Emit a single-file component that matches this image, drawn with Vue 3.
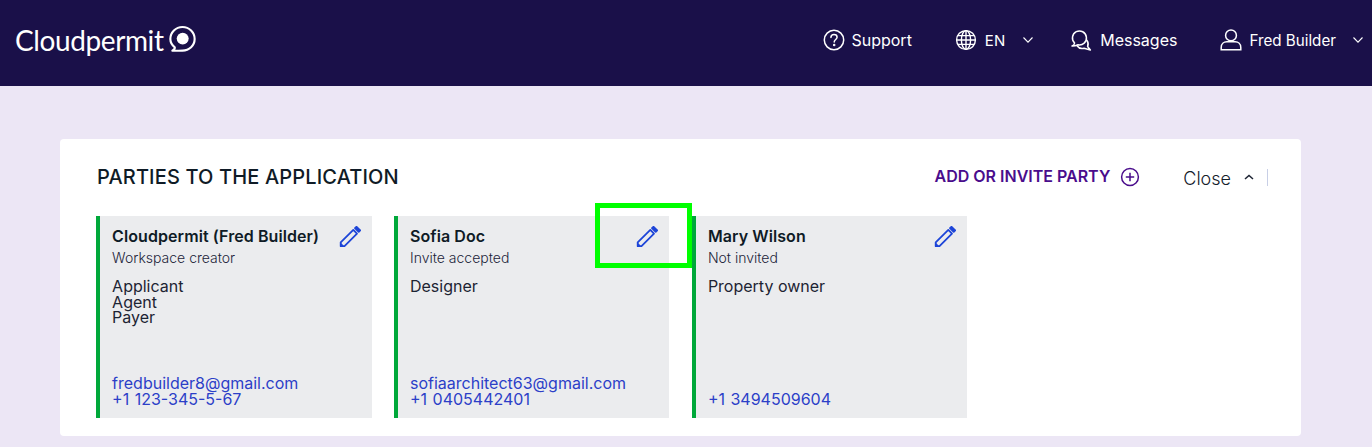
<script setup>
const parties = [
  { name: 'Cloudpermit (Fred Builder)', status: 'Workspace creator', roles: ['Applicant', 'Agent', 'Payer'], email: 'fredbuilder8@gmail.com', phone: '+1 123-345-5-67' },
  { name: 'Sofia Doc', status: 'Invite accepted', roles: ['Designer'], email: 'sofiaarchitect63@gmail.com', phone: '+1 0405442401' },
  { name: 'Mary Wilson', status: 'Not invited', roles: ['Property owner'], email: '', phone: '+1 3494509604' },
]
</script>

<template>
  <div class="page">
    <header class="topbar">
      <div class="logo">
        <span class="logo-text">Cloudpermit</span>
        <svg class="logo-mark" width="27" height="28" viewBox="0 0 28 28" fill="none">
          <path d="M3.5 26.2 C5.5 25 6.3 23.8 6 22.6 C2.8 20.2 1.4 17.2 1.4 14 C1.4 7.2 7 1.6 14 1.6 C21 1.6 26.6 7.2 26.6 14 C26.6 20.8 21 26 14 26 C10.5 26 7 26.4 3.5 26.2 Z" stroke="#fff" stroke-width="2.2" stroke-linejoin="round"/>
          <circle cx="14.2" cy="13.6" r="6.2" fill="#fff"/>
        </svg>
      </div>
      <nav class="nav">
        <a class="nav-item support">
          <svg width="24" height="24" viewBox="0 0 24 24" fill="none" stroke="#fff" stroke-width="1.5" stroke-linecap="round">
            <circle cx="12" cy="12" r="9.7"/>
            <path d="M8.9 9.4 C9 7.6 10.4 6.6 12 6.6 C13.8 6.6 15.1 7.8 15.1 9.3 C15.1 11.4 12.2 11.6 12.2 14"/>
            <circle cx="12.2" cy="17" r=".5" fill="#fff"/>
          </svg>
          <span>Support</span>
        </a>
        <a class="nav-item lang">
          <svg width="24" height="24" viewBox="0 0 24 24" fill="none" stroke="#fff" stroke-width="1.4">
            <circle cx="12" cy="12" r="9.4"/>
            <ellipse cx="12" cy="12" rx="4.6" ry="9.4"/>
            <path d="M12 2.6V21.4M2.6 12H21.4M3.8 7.6H20.2M3.8 16.4H20.2"/>
          </svg>
          <span class="en">EN</span>
          <svg class="chev" width="12" height="8" viewBox="0 0 12 8" fill="none" stroke="#fff" stroke-width="1.1"><path d="M1.5 1.5 6 6.2 10.5 1.5"/></svg>
        </a>
        <a class="nav-item messages">
          <svg width="22" height="24" viewBox="0 0 22 24" fill="none" stroke="#fff" stroke-width="1.5" stroke-linecap="round" stroke-linejoin="round">
            <path d="M2 18 C3.6 17.6 4.4 16.6 4.6 15 A7 7 0 1 1 8 16.8 C6 17.6 4 18.2 2 18 Z"/>
            <path d="M16.6 12 C18.2 14 18.6 16.4 17.6 18.6 L20.4 22 L14 20.2 C11 21 8.4 19.8 7 17.8"/>
          </svg>
          <span>Messages</span>
        </a>
        <a class="nav-item user">
          <svg width="22" height="24" viewBox="0 0 22 24" fill="none" stroke="#fff" stroke-width="1.5">
            <circle cx="11" cy="7.4" r="5.4"/>
            <path d="M1.2 21.8 V19.4 C1.2 16 3.8 13.8 6.8 13.8 H15.2 C18.2 13.8 20.8 16 20.8 19.4 V21.8 Z"/>
          </svg>
          <span class="fred">Fred Builder</span>
          <svg class="chev" width="12" height="8" viewBox="0 0 12 8" fill="none" stroke="#fff" stroke-width="1.1"><path d="M1.5 1.5 6 6.2 10.5 1.5"/></svg>
        </a>
      </nav>
    </header>

    <main class="main">
      <section class="panel">
        <div class="panel-head">
          <h2 class="title">PARTIES TO THE APPLICATION</h2>
          <div class="actions">
            <a class="add">ADD OR INVITE PARTY</a>
            <svg class="plus" width="20" height="20" viewBox="0 0 20 20" fill="none" stroke="#4a0d8c" stroke-width="1.5">
              <circle cx="10" cy="10" r="8.4"/>
              <path d="M10 5.8V14.2M5.8 10H14.2"/>
            </svg>
            <span class="close">Close</span>
            <svg class="caret" width="10" height="6" viewBox="0 0 10 6" fill="none" stroke="#1d2433" stroke-width="1.5"><path d="M1 5 5 1.4 9 5"/></svg>
            <span class="divider"></span>
          </div>
        </div>

        <div class="cards">
          <article v-for="p in parties" :key="p.name" class="card">
            <div class="card-top">
              <div>
                <div class="name">{{ p.name }}</div>
                <div class="status">{{ p.status }}</div>
              </div>
              <svg class="edit" width="22" height="22" viewBox="0 0 22 22" fill="none" stroke="#1d45d8" stroke-width="1.8" stroke-linejoin="round">
                <path d="M1.7 16.4 14.3 3.9 18 7.6 5.5 20.2 H1.7 Z"/>
                <path d="M1.7 18 3.9 20.2" />
                <path d="M16 2.2 17.6 .8 21.2 4.3 19.7 5.9 Z" fill="#1d45d8"/>
              </svg>
            </div>
            <div class="roles">
              <div v-for="r in p.roles" :key="r">{{ r }}</div>
            </div>
            <div class="contact">
              <a v-if="p.email" class="email">{{ p.email }}</a>
              <a class="phone">{{ p.phone }}</a>
            </div>
          </article>
        </div>
      </section>
    </main>

    <div class="highlight"></div>
  </div>
</template>

<style>
html, body { margin: 0; padding: 0; background: #ece6f5; }
</style>

<style scoped>
.page {
  position: relative;
  width: 1372px;
  height: 447px;
  overflow: hidden;
  background: #ece6f5;
  font-family: Inter, "Liberation Sans", sans-serif;
  color: #1d2433;
}
.topbar {
  height: 86px;
  background: #1a1049;
  display: flex;
  align-items: center;
  justify-content: space-between;
  padding: 0 8px 6px 15px;
  box-sizing: border-box;
  color: #fff;
}
.logo { display: flex; align-items: center; gap: 5px; }
.logo-text {
  font-family: Lato, "Open Sans", sans-serif;
  font-size: 28px;
  font-weight: 400;
  letter-spacing: -0.4px;
  line-height: 32px;
}
.logo-mark { margin-top: -3px; }
.nav { display: flex; align-items: center; }
.nav-item { display: flex; align-items: center; font-size: 16px; line-height: 24px; }
.support { gap: 5px; margin-right: 42px; }
.lang { margin-right: 36px; }
.lang .en { margin: 2px 17px 0 7px; font-size: 15px; }
.messages { gap: 8px; margin-right: 43px; }
.user .fred { margin: 2px 16px 0 7px; font-size: 15.2px; }
.chev { display: block; }
.main { padding: 53px 71px 0 60px; }
.panel {
  height: 297px;
  background: #fff;
  border-radius: 4px;
  padding: 26px 33px 18px 36px;
  box-sizing: border-box;
}
.panel-head { display: flex; align-items: center; justify-content: space-between; height: 24px; }
.title {
  margin: 0 0 0 1px;
  font-size: 20px;
  font-weight: 500;
  letter-spacing: 0.15px;
  line-height: 24px;
  color: #0f1b26;
}
.actions { display: flex; align-items: center; }
.add {
  font-size: 16px;
  font-weight: 600;
  color: #4a0d8c;
  margin-right: 10px;
  position: relative;
  top: -1px;
}
.plus { margin-right: 43px; }
.close { font-size: 18px; font-weight: 300; color: #14202b; margin-right: 13px; position: relative; top: 1px; }
.caret { margin-right: 13px; }
.divider { width: 1px; height: 17px; background: #c8cfe6; }
.cards { display: flex; gap: 22.4px; margin-top: 27px; }
.card {
  width: 275.5px;
  height: 202px;
  box-sizing: border-box;
  background: #ebecee;
  border-left: 4px solid #00a83a;
  padding: 10px 11px 0 12.1px;
  display: flex;
  flex-direction: column;
}
.card-top { display: flex; justify-content: space-between; align-items: flex-start; }
.name { font-size: 16px; font-weight: 600; letter-spacing: 0.08px; line-height: 20px; color: #0f1b26; }
.status { font-size: 14px; font-weight: 300; line-height: 16px; margin-top: 4px; color: #1d1f3a; }
.edit { flex: none; margin-top: 0; }
.roles { margin-top: 13px; font-size: 16px; font-weight: 400; line-height: 15.5px; color: #1d2433; }
.contact {
  margin-top: auto;
  margin-bottom: 11px;
  display: flex;
  flex-direction: column;
  font-size: 16px;
  font-weight: 400;
  color: #2c3fc8;
}
.email { line-height: 15px; }
.phone { line-height: 16px; word-spacing: 1px; }
.highlight {
  position: absolute;
  left: 595px;
  top: 203px;
  width: 97px;
  height: 65px;
  box-sizing: border-box;
  border: 5px solid #00ff00;
}
</style>
